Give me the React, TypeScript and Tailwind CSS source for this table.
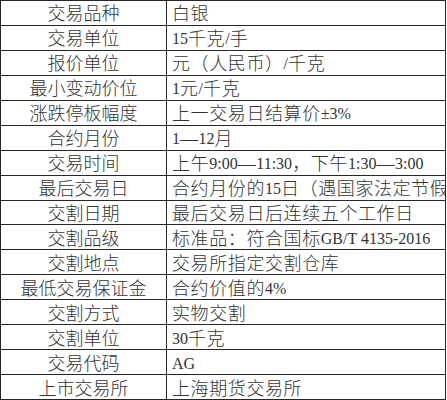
import React from 'react';

const rows: [string, string][] = [
  ['交易品种', '白银'],
  ['交易单位', '15千克/手'],
  ['报价单位', '元（人民币）/千克'],
  ['最小变动价位', '1元/千克'],
  ['涨跌停板幅度', '上一交易日结算价±3%'],
  ['合约月份', '1—12月'],
  ['交易时间', '上午9:00—11:30，下午1:30—3:00'],
  ['最后交易日', '合约月份的15日（遇国家法定节假日顺延）'],
  ['交割日期', '最后交易日后连续五个工作日'],
  ['交割品级', '标准品：符合国标GB/T 4135-2016'],
  ['交割地点', '交易所指定交割仓库'],
  ['最低交易保证金', '合约价值的4%'],
  ['交割方式', '实物交割'],
  ['交割单位', '30千克'],
  ['交易代码', 'AG'],
  ['上市交易所', '上海期货交易所'],
];

// latin runs are a bit smaller than the CJK text around them
function Value({ text }: { text: string }) {
  const parts = text.match(/[A-Za-z0-9:/\-±%. ]+|[^A-Za-z0-9:/\-±%. ]+/g) ?? [];
  return (
    <>
      {parts.map((p, i) =>
        /^[A-Za-z0-9:/\-±%. ]+$/.test(p) ? (
          <span key={i} className="text-[16px] font-normal tracking-normal">
            {p}
          </span>
        ) : (
          <span key={i} className="tracking-[0.6px]">
            {p}
          </span>
        )
      )}
    </>
  );
}

export default function App() {
  return (
    <div className="w-[447px] h-[400px] bg-white">
      <div className="w-[446px] h-[400px] border border-[#262626] flex flex-col text-[#333] text-[18px]">
        {rows.map(([label, value], i) => (
          <div
            key={label}
            className={`flex flex-1 min-h-0 ${i < rows.length - 1 ? 'border-b border-[#262626]' : ''}`}
          >
            <div className="w-[166px] shrink-0 border-r border-[#262626] flex items-center justify-center pt-[3px] font-['Liberation_Sans','Noto_Sans_CJK_SC',sans-serif] font-light leading-[20px] whitespace-nowrap">
              {label}
            </div>
            <div className="flex-1 min-w-0 overflow-x-clip flex items-center pl-[5px] pt-[3px] font-['Liberation_Serif','Noto_Sans_CJK_SC',serif] font-light leading-[20px] whitespace-nowrap">
              <Value text={value} />
            </div>
          </div>
        ))}
      </div>
    </div>
  );
}
